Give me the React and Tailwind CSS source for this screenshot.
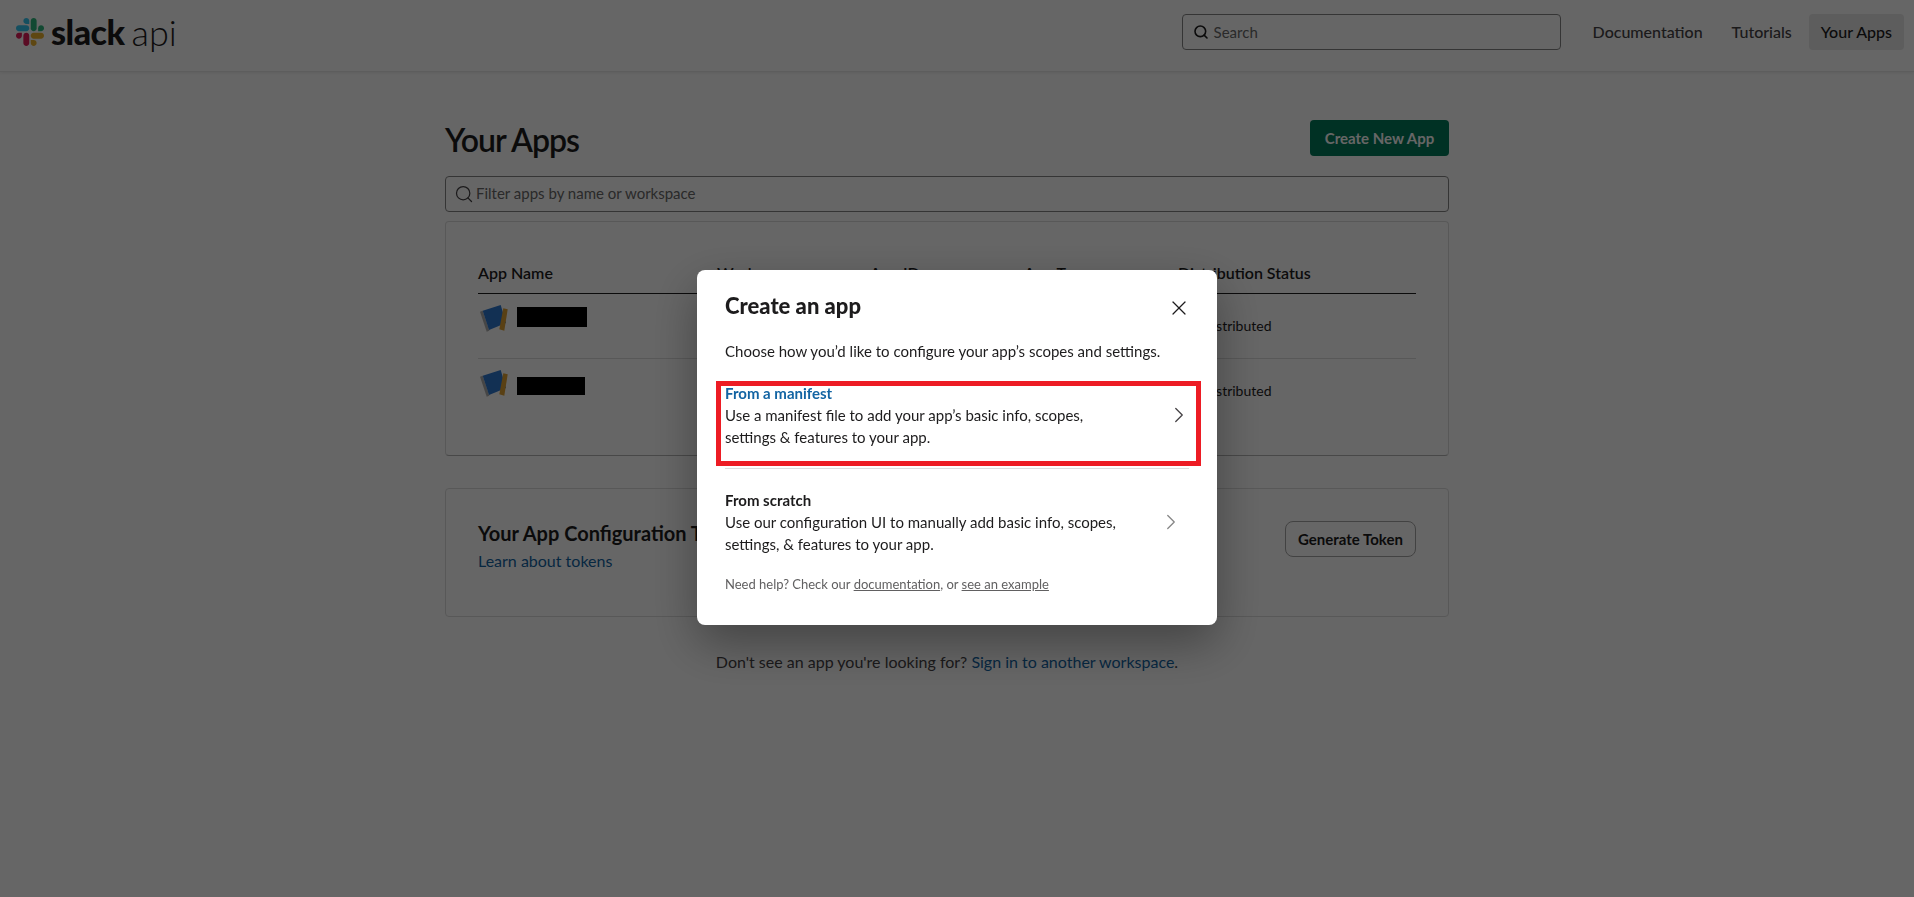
import React from 'react';
import { ChevronRight, Search, X } from 'lucide-react';

function SlackMark() {
  return (
    <svg viewBox="0 0 122.8 122.8" className="w-[28px] h-[28px] shrink-0">
      <path d="M25.8 77.6c0 7.1-5.8 12.9-12.9 12.9S0 84.7 0 77.6s5.8-12.9 12.9-12.9h12.9v12.9z" fill="#E01E5A" />
      <path d="M32.3 77.6c0-7.1 5.8-12.9 12.9-12.9s12.9 5.8 12.9 12.9v32.3c0 7.1-5.8 12.9-12.9 12.9s-12.9-5.8-12.9-12.9V77.6z" fill="#E01E5A" />
      <path d="M45.2 25.8c-7.1 0-12.9-5.8-12.9-12.9S38.1 0 45.2 0s12.9 5.8 12.9 12.9v12.9H45.2z" fill="#36C5F0" />
      <path d="M45.2 32.3c7.1 0 12.9 5.8 12.9 12.9s-5.8 12.9-12.9 12.9H12.9C5.8 58.1 0 52.3 0 45.2s5.8-12.9 12.9-12.9h32.3z" fill="#36C5F0" />
      <path d="M97 45.2c0-7.1 5.8-12.9 12.9-12.9s12.9 5.8 12.9 12.9-5.8 12.9-12.9 12.9H97V45.2z" fill="#2EB67D" />
      <path d="M90.5 45.2c0 7.1-5.8 12.9-12.9 12.9s-12.9-5.8-12.9-12.9V12.9C64.7 5.8 70.5 0 77.6 0s12.9 5.8 12.9 12.9v32.3z" fill="#2EB67D" />
      <path d="M77.6 97c7.1 0 12.9 5.8 12.9 12.9s-5.8 12.9-12.9 12.9-12.9-5.8-12.9-12.9V97h12.9z" fill="#ECB22E" />
      <path d="M77.6 90.5c-7.1 0-12.9-5.8-12.9-12.9s5.8-12.9 12.9-12.9h32.3c7.1 0 12.9 5.8 12.9 12.9s-5.8 12.9-12.9 12.9H77.6z" fill="#ECB22E" />
    </svg>
  );
}

function BookIcon() {
  return (
    <svg viewBox="0 0 28 28" className="w-[28px] h-[28px] shrink-0">
      <path d="M0 6.7 L2.7 5.7 L9.3 25.7 L6.7 26.7 Z" fill="#b0b0b0" />
      <path d="M2.7 5.7 L20.7 0 L26 18 L9 25 Z" fill="#2f78cf" />
      <path d="M23.3 3.3 L27.7 4.3 L24.3 25.7 L19.3 24.3 Z" fill="#dfa033" />
    </svg>
  );
}

function AppRow({ redact, border }) {
  return (
    <div className={`grid grid-cols-[239px_153px_154px_154px_1fr] h-[65px] ${border}`}>
      <div className="flex items-start pt-[11px] pl-[2px] gap-[9px]">
        <BookIcon />
        <span className={redact} />
      </div>
      <div />
      <div />
      <div />
      <div className="self-center text-[14px] text-[#1d1c1d] pb-[2px]">Not distributed</div>
    </div>
  );
}

function Option({ title, titleColor, lines, chevron, pad, border }) {
  return (
    <div className={`flex items-center justify-between ${pad} ${border}`}>
      <div className="max-w-[400px] text-[15px] leading-[22px] text-[#1d1c1d]">
        <div className={`font-bold ${titleColor}`}>{title}</div>
        <div>{lines}</div>
      </div>
      {chevron}
    </div>
  );
}

export default function App() {
  return (
    <div className="relative h-screen overflow-hidden bg-white font-['Lato','Liberation_Sans',sans-serif] text-[#1d1c1d]">
      <header className="h-[72px] flex items-center justify-between pl-[16px] pr-[10px] pb-[7px] border-b border-[#e8e8e8] shadow-[0_1px_3px_rgba(0,0,0,0.08)]">
        <div className="flex items-center">
          <SlackMark />
          <span className="ml-[7px] text-[34px] leading-[40px] font-black tracking-[-0.5px] text-[#1d1c1d]">slack</span>
          <span className="ml-[7px] text-[36px] leading-[40px] font-light text-[#1d1c1d]">api</span>
        </div>
        <div className="flex items-center">
          <div className="flex items-center w-[379px] h-[36px] border border-[#868686] rounded-[4px] px-[10px] gap-[5px] text-[15px] text-[#696969]">
            <Search size={16} strokeWidth={2.4} className="text-[#1d1c1d]" />
            Search
          </div>
          <nav className="flex items-center ml-[32px] text-[16px] font-medium">
            <a className="text-[#454245]">Documentation</a>
            <a className="ml-[29px] text-[#454245]">Tutorials</a>
            <a className="ml-[17px] h-[36px] px-[12px] flex items-center rounded-[4px] bg-[#e8e8e8] text-[#1d1c1d]">Your Apps</a>
          </nav>
        </div>
      </header>

      <main className="w-[1004px] ml-[445px] pt-[48px]">
        <div className="flex items-center justify-between h-[36px]">
          <h1 className="text-[32px] pt-[4px] font-semibold tracking-[-1px] text-[#1d1c1d]">Your Apps</h1>
          <button className="h-[36px] w-[139px] rounded-[4px] bg-[#007a5a] text-white text-[15px] font-bold">Create New App</button>
        </div>

        <div className="mt-[20px] h-[36px] flex items-center border border-[#868686] rounded-[4px] pl-[8px] pb-[1px] gap-[2px] text-[15px] text-[#696969]">
          <Search size={20} strokeWidth={1.5} className="text-[#454245]" />
          Filter apps by name or workspace
        </div>

        <section className="mt-[9px] h-[235px] border border-[#dddddd] border-b-[#b5b5b5] rounded-[4px] px-[32px] pt-[39px]">
          <div className="grid grid-cols-[239px_153px_154px_154px_1fr] h-[33px] leading-[24px] text-[16px] font-semibold border-b border-[#1d1c1d]">
            <div>App Name</div>
            <div>Workspace</div>
            <div>App ID</div>
            <div>App Type</div>
            <div>Distribution Status</div>
          </div>
          <AppRow redact="mt-[2px] w-[70px] h-[20px] bg-black" border="border-b border-[#dddddd]" />
          <AppRow redact="mt-[7px] w-[68px] h-[18px] bg-black" border="" />
        </section>

        <section className="mt-[32px] h-[129px] border border-[#dddddd] rounded-[4px] px-[32px] pt-[32px] flex justify-between items-start">
          <div>
            <h2 className="text-[20px] leading-[24px] font-bold">Your App Configuration Tokens</h2>
            <a className="block mt-[4px] text-[16px] leading-[24px] text-[#1264a3]">Learn about tokens</a>
          </div>
          <button className="h-[36px] w-[131px] rounded-[8px] border border-[#a5a5a5] text-[15px] font-bold">Generate Token</button>
        </section>

        <p className="mt-[33px] text-center text-[16px] leading-[24px] text-[#454245]">
          Don't see an app you're looking for? <a className="text-[#1264a3]">Sign in to another workspace</a>.
        </p>
      </main>

      <div className="fixed inset-0 bg-black/60 flex items-center justify-center pb-[2px]">
        <div className="relative w-[520px] h-[355px] bg-white rounded-[8px] pl-[28px] pr-[28px] pt-[20px] shadow-[0_18px_48px_rgba(0,0,0,0.35)]">
          <div className="flex items-center justify-between h-[30px] mb-[20px]">
            <h2 className="text-[22px] font-black text-[#1d1c1d]">Create an app</h2>
            <X size={24} strokeWidth={1.2} className="text-[#1d1c1d] mt-[6px] mr-[-2px]" />
          </div>
          <p className="text-[15px] leading-[22px] text-[#1d1c1d] mb-[20px]">Choose how you’d like to configure your app’s scopes and settings.</p>

          <Option
            title="From a manifest"
            titleColor="text-[#1264a3]"
            lines="Use a manifest file to add your app’s basic info, scopes, settings & features to your app."
            chevron={<ChevronRight size={26} strokeWidth={1.2} className="text-[#454245] mr-[-3px]" />}
            pad="pb-[20px]"
            border="border-b border-[#dddddd]"
          />
          <Option
            title="From scratch"
            titleColor="text-[#1d1c1d]"
            lines="Use our configuration UI to manually add basic info, scopes, settings, & features to your app."
            chevron={<ChevronRight size={26} strokeWidth={1.2} className="text-[#868686] mr-[5px]" />}
            pad="pt-[20px]"
            border=""
          />

          <p className="mt-[19px] text-[13px] leading-[20px] text-[#616061]">
            Need help? Check our <a className="underline">documentation</a>, or <a className="underline">see an example</a>
          </p>

          <div className="absolute left-[19px] top-[111px] w-[485px] h-[85px] border-[5px] border-[#ed1c24]" />
        </div>
      </div>
    </div>
  );
}
